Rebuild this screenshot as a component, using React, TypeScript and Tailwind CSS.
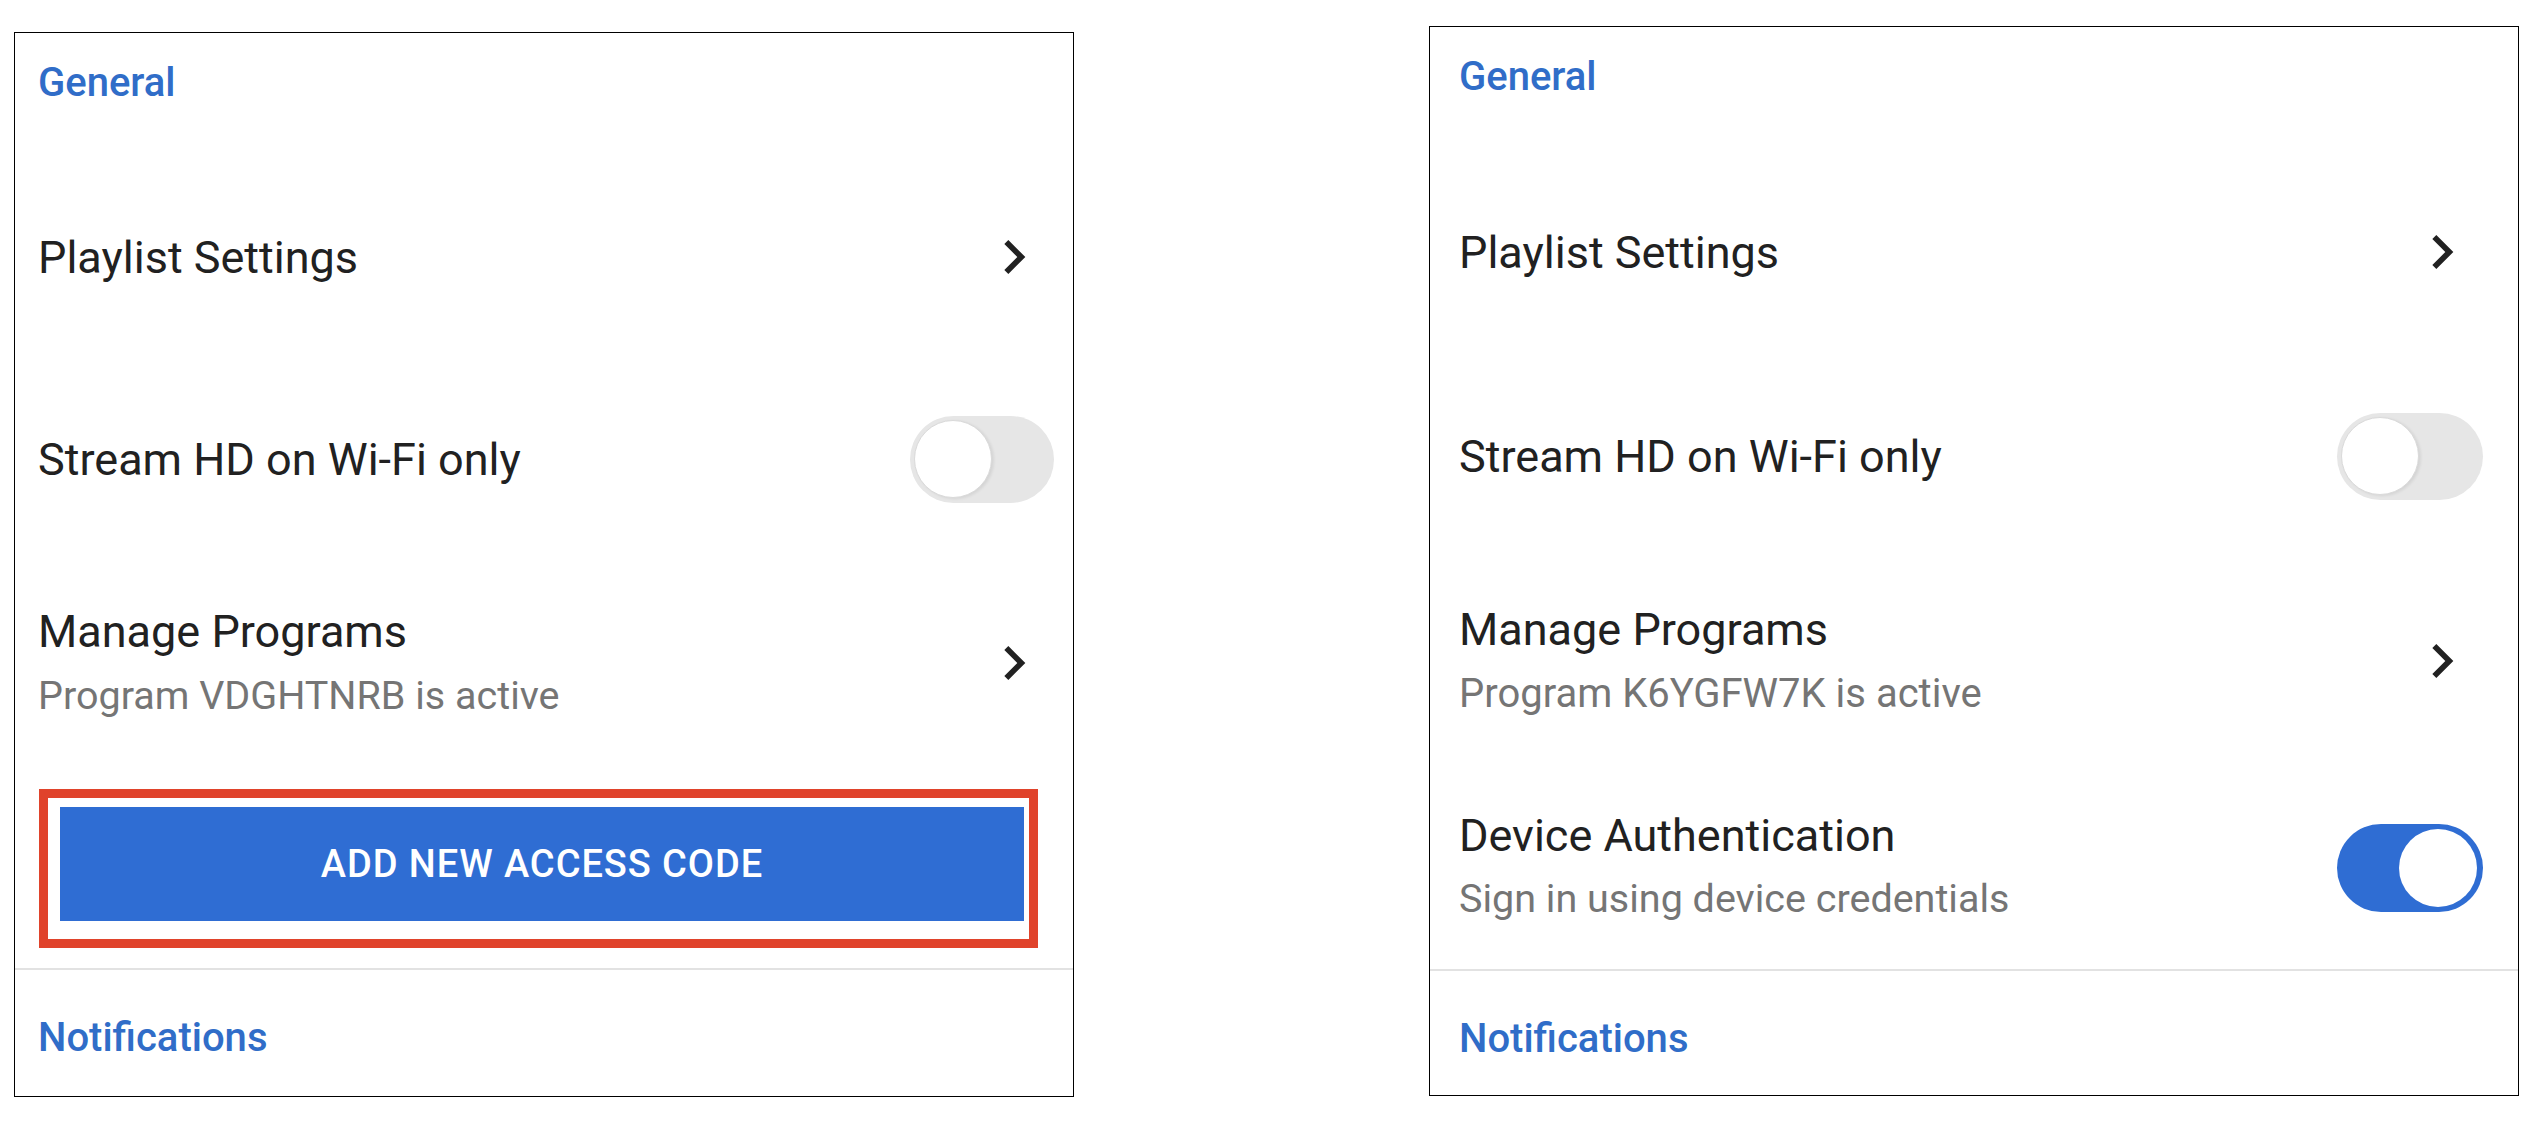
import React from "react";

const font = { fontFamily: "Roboto, 'Noto Sans', Arial, sans-serif" };

function Chevron({ className = "" }: { className?: string }) {
  return (
    <svg width="68" height="68" viewBox="0 0 24 24" className={className}>
      <path d="M10 6L8.59 7.41 13.17 12l-4.58 4.59L10 18l6-6z" fill="#212121" />
    </svg>
  );
}

function ToggleOff({ w }: { w: string }) {
  return (
    <div className={`${w} h-[87px] rounded-full bg-[#e6e6e6] flex items-center pl-[4px]`}>
      <div className="w-[78px] h-[78px] rounded-full bg-white border border-[#dadada] shadow-[2px_1px_3px_rgba(0,0,0,0.08)]" />
    </div>
  );
}

function ToggleOn() {
  return (
    <div className="w-[146px] h-[88px] rounded-full bg-[#2f6dd3] flex items-center justify-end pr-[6px]">
      <div className="w-[78px] h-[78px] rounded-full bg-white" />
    </div>
  );
}

export default function App() {
  return (
    <div className="w-[2538px] h-[1124px] bg-white flex items-start" style={font}>
      {/* Left panel */}
      <div className="ml-[14px] mt-[32px] w-[1060px] h-[1065px] border border-black flex flex-col">
        <div className="h-[100px] pl-[23px] flex items-center">
          <span className="text-[40px] leading-none font-medium text-[#306dc8]">General</span>
        </div>
        <div className="h-[248px] pl-[23px] pr-[19px] flex items-center justify-between">
          <span className="text-[45px] leading-none text-[#212121]">Playlist Settings</span>
          <Chevron className="mr-[6px]" />
        </div>
        <div className="h-[156px] pl-[23px] pr-[19px] flex items-center justify-between">
          <span className="text-[45px] leading-none text-[#212121]">Stream HD on Wi-Fi only</span>
          <ToggleOff w="w-[144px]" />
        </div>
        <div className="h-[252px] pl-[23px] pr-[19px] flex items-center justify-between">
          <div className="flex flex-col">
            <span className="text-[45px] leading-[52px] text-[#212121]">Manage Programs</span>
            <span className="mt-[14px] text-[39.5px] leading-[48px] text-[#757575]">Program VDGHTNRB is active</span>
          </div>
          <Chevron className="mr-[6px]" />
        </div>
        <div className="ml-[24px] w-[999px] h-[159px] border-[9px] border-[#e0432b] pt-[9px] pl-[12px] pr-[5px] pb-[18px]">
          <div className="h-full bg-[#2f6dd3] flex items-center justify-center">
            <span className="text-[38px] leading-none font-medium tracking-[0.025em] text-white">ADD NEW ACCESS CODE</span>
          </div>
        </div>
        <div className="mt-[20px] h-[2px] bg-[#e2e2e2]" />
        <div className="pt-[48px] pl-[23px]">
          <span className="text-[40px] leading-none font-medium text-[#306dc8]">Notifications</span>
        </div>
      </div>

      {/* Right panel */}
      <div className="ml-[355px] mt-[26px] w-[1090px] h-[1070px] border border-black flex flex-col">
        <div className="h-[100px] pl-[29px] flex items-center">
          <span className="text-[40px] leading-none font-medium text-[#306dc8]">General</span>
        </div>
        <div className="h-[250px] pl-[29px] pr-[35px] flex items-center justify-between">
          <span className="text-[45px] leading-none text-[#212121]">Playlist Settings</span>
          <Chevron className="mr-[7px]" />
        </div>
        <div className="h-[158px] pl-[29px] pr-[35px] flex items-center justify-between">
          <span className="text-[45px] leading-none text-[#212121]">Stream HD on Wi-Fi only</span>
          <ToggleOff w="w-[146px]" />
        </div>
        <div className="h-[252px] pl-[29px] pr-[35px] flex items-center justify-between">
          <div className="flex flex-col">
            <span className="text-[45px] leading-[52px] text-[#212121]">Manage Programs</span>
            <span className="mt-[14px] text-[40px] leading-[48px] text-[#757575]">Program K6YGFW7K is active</span>
          </div>
          <Chevron className="mr-[7px]" />
        </div>
        <div className="h-[162px] pl-[29px] pr-[35px] flex items-center justify-between">
          <div className="flex flex-col mt-[-4px]">
            <span className="text-[45px] leading-[52px] text-[#212121]">Device Authentication</span>
            <span className="mt-[13px] text-[39.5px] leading-[48px] text-[#757575]">Sign in using device credentials</span>
          </div>
          <ToggleOn />
        </div>
        <div className="mt-[20px] h-[2px] bg-[#e2e2e2]" />
        <div className="pt-[48px] pl-[29px]">
          <span className="text-[40px] leading-none font-medium text-[#306dc8]">Notifications</span>
        </div>
      </div>
    </div>
  );
}
